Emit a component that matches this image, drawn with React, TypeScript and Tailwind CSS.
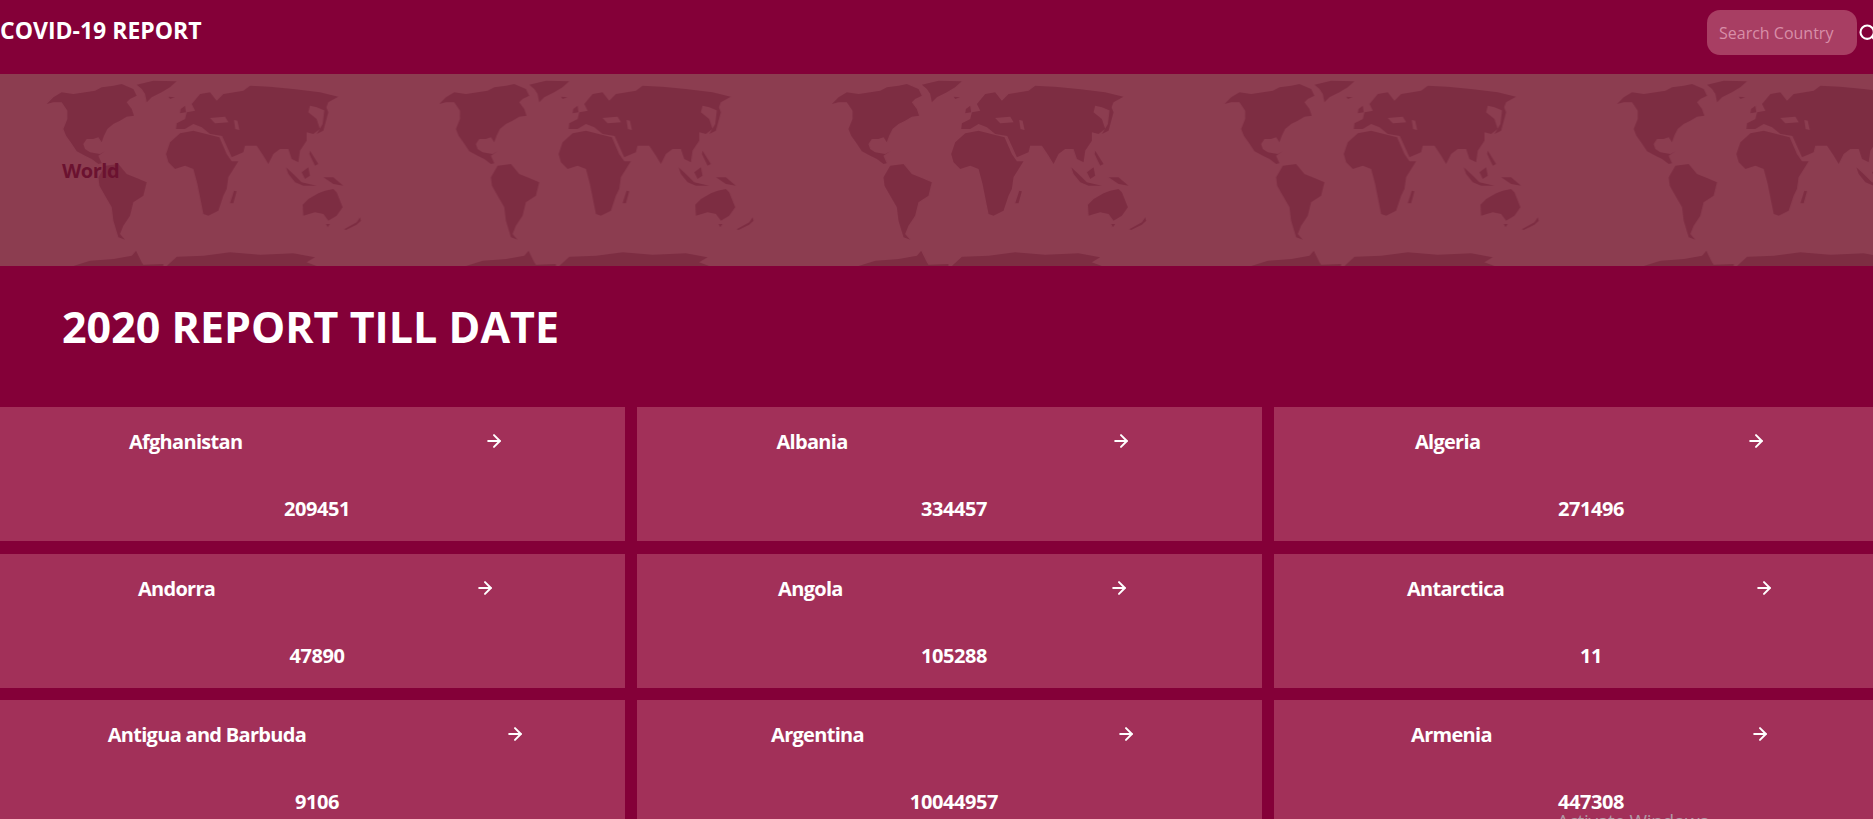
import { ArrowRight, Search } from "lucide-react";

const countries = [
  { name: "Afghanistan", total: 209451 },
  { name: "Albania", total: 334457 },
  { name: "Algeria", total: 271496 },
  { name: "Andorra", total: 47890 },
  { name: "Angola", total: 105288 },
  { name: "Antarctica", total: 11 },
  { name: "Antigua and Barbuda", total: 9106 },
  { name: "Argentina", total: 10044957 },
  { name: "Armenia", total: 447308 },
];

// traced from the banner at 3x, the tile repeats every 392.6px
const americas = [
  "M50 90L70 70L95 55L130 60L165 55L195 50L215 40L250 35L275 30L310 45L320 65L300 75L290 85L305 105L312 125L290 128L270 140L250 150L232 165L222 185L215 205L205 190L190 195L170 195L160 210L165 225L180 235L210 240L225 232L205 245L215 268L205 270L185 255L165 245L140 232L122 205L108 185L100 165L112 135L112 110L95 85L70 85Z",
  "M320 32L370 20L440 22L420 40L395 55L365 70L350 85L345 60L335 45Z",
  "M205 310L225 275L265 270L290 300L320 312L350 325L340 365L310 385L300 425L280 455L270 480L285 497L265 490L250 440L245 400L225 365L208 335Z",
  "M130 576L180 560L250 555L305 545L318 530L335 565L340 572L400 570L400 576Z",
];

const oldWorld = [
  "M18 240L30 205L60 178L100 170L130 178L178 190L200 240L215 262L235 262L205 310L200 345L190 365L175 410L145 425L130 420L122 380L112 330L100 285L75 275L45 285L25 265Z",
  "M222 350L230 352L220 388L210 388Z",
  "M48 165L50 148L75 135L80 115L105 110L95 90L120 60L150 55L170 80L190 60L250 50L270 35L330 38L400 45L480 55L535 68L505 85L495 110L470 100L450 95L445 115L470 135L480 165L460 180L440 175L440 200L420 230L415 265L395 255L385 225L360 225L340 240L325 270L310 245L290 215L255 215L250 235L215 250L197 210L186 186L150 180L125 160L100 150L75 165Z",
  "M62 105L75 95L78 115L60 118Z",
  "M25 68L45 70L30 75Z",
  "M495 90L505 115L490 170L470 180L488 150Z",
  "M450 230L475 270L465 275L448 240Z",
  "M378 280L400 300L425 325L470 335L430 335L405 325L385 300Z",
  "M425 295L445 280L450 305L435 315Z",
  "M490 310L520 310L550 335L520 330Z",
  "M428 392L445 375L475 358L495 350L520 345L530 355L548 400L530 425L505 440L490 420L465 415L430 425Z",
  "M498 450L510 450L503 460Z",
  "M552 466L590 445L600 430L603 440L590 452L558 468Z",
  "M20 576L50 548L130 545L210 535L300 542L400 538L465 550L440 565L470 576Z",
];

// inland seas cut back to the banner colour
const seas = ["M150 132L195 128L205 145L165 148Z", "M222 138L232 140L238 168L226 165Z"];

function WorldMap() {
  return (
    <svg className="absolute inset-0 h-full w-full blur-[0.4px]" aria-hidden="true">
      <defs>
        <pattern id="world" width="392.6" height="192" patternUnits="userSpaceOnUse">
          <g transform="translate(30 0) scale(0.33333)" fill="#7d2d42">
            {americas.map((d) => (
              <path key={d} d={d} />
            ))}
          </g>
          <g transform="translate(160 0) scale(0.33333)" fill="#7d2d42">
            {oldWorld.map((d) => (
              <path key={d} d={d} />
            ))}
            {seas.map((d) => (
              <path key={d} d={d} fill="#8c3d50" />
            ))}
          </g>
        </pattern>
      </defs>
      <rect width="100%" height="100%" fill="url(#world)" />
    </svg>
  );
}

function CountryCard({ name, total }: { name: string; total: number }) {
  return (
    <div className="h-[134px] bg-[#a23059] text-[20px] font-bold tracking-[-0.7px] text-white">
      <div className="flex justify-around pl-[8px] pt-[20px]">
        <span className="leading-[30px]">{name}</span>
        <span className="flex h-[28px] items-center">
          <ArrowRight size={20} strokeWidth={2.4} />
        </span>
      </div>
      <p className="mt-[37px] w-[634px] text-center leading-[30px] tracking-[-0.4px]">{total}</p>
    </div>
  );
}

export default function App() {
  return (
    <div className="relative h-screen overflow-hidden bg-[#840038] font-['Open_Sans',sans-serif]">
      {/* Navbar */}
      <header className="flex h-[74px] w-[1878px] items-start justify-between pt-[10px]">
        <h1 className="mt-[4px] text-[23px] font-bold leading-[32px] text-white">COVID-19 REPORT</h1>
        <div className="flex items-center">
          <input
            placeholder="Search Country"
            className="h-[45px] w-[150px] rounded-[13px] bg-[#a83e63] px-3 text-[16px] text-white outline-none placeholder:text-[#d88ea8]"
          />
          <Search size={20} strokeWidth={2.5} className="ml-px text-white" />
        </div>
      </header>

      {/* Banner */}
      <section className="relative flex h-[192px] items-center bg-[#8c3d50] pl-[62px]">
        <WorldMap />
        <span className="relative mt-[2px] text-[20px] font-bold tracking-[-0.5px] text-[#6b1230]">World</span>
      </section>

      <section className="flex h-[141px] items-start pl-[62px] pt-[31px]">
        <h2 className="text-[43px] font-bold leading-[60px] text-white">2020 REPORT TILL DATE</h2>
      </section>

      {/* Countries */}
      <div className="grid w-[1899px] grid-cols-3 gap-x-3 gap-y-[12.5px]">
        {countries.map((c) => (
          <CountryCard key={c.name} name={c.name} total={c.total} />
        ))}
      </div>

      {/* OS watermark */}
      <div className="absolute left-[1557px] top-[807px] text-[19px] tracking-[-0.3px] text-[#b09aa5]">Activate Windows</div>
    </div>
  );
}
